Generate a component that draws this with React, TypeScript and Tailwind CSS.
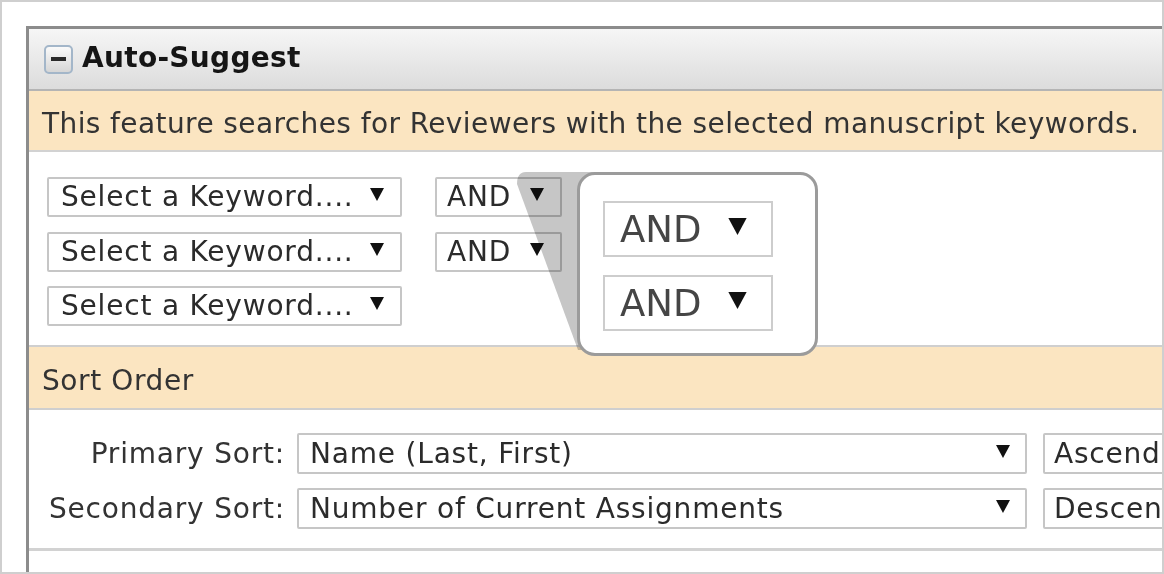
import React from "react";

function Arrow({ className = "w-[14px] h-[13px]" }: { className?: string }) {
  return (
    <svg viewBox="0 0 14 13" className={className}>
      <polygon points="0,0 14,0 7,13" fill="#111" />
    </svg>
  );
}

interface SelectBoxProps {
  label: string;
  width: string;
  height?: string;
  padLeft?: string;
  padRight?: string;
}

function SelectBox({ label, width, height = "h-[40px]", padLeft = "pl-[11px]", padRight = "pr-[15px]" }: SelectBoxProps) {
  return (
    <div
      className={`${width} ${height} ${padLeft} ${padRight} shrink-0 flex items-center justify-between rounded-[2px] border-2 border-[#c6c6c6] bg-white text-[28px] tracking-[0.8px] leading-none text-[#2b2b2b] whitespace-nowrap overflow-hidden`}
    >
      <span>{label}</span>
      <span className="pb-[5px]">
        <Arrow />
      </span>
    </div>
  );
}

function CollapseIcon() {
  return (
    <div className="w-[29px] h-[29px] rounded-[5px] border-2 border-[#a3b6c9] bg-gradient-to-b from-[#fafafa] to-[#d6d6d6] flex items-center justify-center">
      <div className="w-[15px] h-[4px] bg-[#2a2a2a]" />
    </div>
  );
}

export default function App() {
  return (
    <div className="w-[1164px] h-[574px] bg-white border-2 border-[#cfcfcf] overflow-hidden pl-[24px] pt-[24px] font-['DejaVu_Sans',sans-serif]">
      <div className="w-[1200px] h-full border-l-[3px] border-t-[3px] border-[#8c8c8c]">
        {/* header */}
        <div className="h-[62px] flex items-center gap-[9px] pl-[15px] border-b-2 border-[#b4b4b4] bg-gradient-to-b from-[#f6f6f6] to-[#dcdcdc]">
          <CollapseIcon />
          <span className="text-[28px] font-bold tracking-[0.3px] text-[#151515] leading-none pb-[2px]">Auto-Suggest</span>
        </div>

        {/* info */}
        <div className="h-[61px] flex items-center pl-[13px] pt-[7px] bg-[#fbe5c1] border-b-2 border-[#d2d2d2]">
          <span className="text-[28px] tracking-[0.4px] leading-none text-[#333] whitespace-nowrap">
            This feature searches for Reviewers with the selected manuscript keywords.
          </span>
        </div>

        {/* keywords */}
        <div className="relative h-[193px] pl-[18px] pt-[25px]">
          <div className="flex gap-[33px]">
            <div className="flex flex-col gap-[14.5px]">
              <SelectBox label="Select a Keyword...." width="w-[355px]" padLeft="pl-[12px]" padRight="pr-[16px]" />
              <SelectBox label="Select a Keyword...." width="w-[355px]" padLeft="pl-[12px]" padRight="pr-[16px]" />
              <SelectBox label="Select a Keyword...." width="w-[355px]" padLeft="pl-[12px]" padRight="pr-[16px]" />
            </div>
            <div className="flex flex-col gap-[14.5px]">
              <SelectBox label="AND" width="w-[127px]" padLeft="pl-[10px]" padRight="pr-[16px]" />
              <SelectBox label="AND" width="w-[127px]" padLeft="pl-[10px]" padRight="pr-[16px]" />
            </div>
          </div>

          {/* magnifier wedge */}
          <svg className="absolute left-[488px] top-[20px] w-[100px] h-[185px] mix-blend-multiply" viewBox="0 0 100 185">
            <path d="M9 0 H100 V140 L68 178 H61 L0 12 Q0 0 9 0 Z" fill="#c6c6c6" />
          </svg>

          {/* magnifier callout */}
          <div className="absolute left-[548px] top-[20px] w-[241px] h-[184px] rounded-[18px] border-[3px] border-[#9b9b9b] bg-white pl-[23px] pt-[26px] flex flex-col gap-[18px]">
            {["AND", "AND"].map((t, i) => (
              <div
                key={i}
                className="w-[170px] h-[56px] flex items-center justify-between pl-[15px] pr-[24px] border-2 border-[#cdcdcd] text-[37px] leading-none text-[#454545]"
              >
                <span className="blur-[0.4px]">{t}</span>
                <span className="pb-[6px]">
                  <Arrow className="w-[19px] h-[17px]" />
                </span>
              </div>
            ))}
          </div>
        </div>

        {/* sort order band */}
        <div className="h-[65px] flex items-center pl-[13px] pt-[7px] bg-[#fbe5c1] border-t-2 border-b-2 border-[#cfcfcf]">
          <span className="text-[28px] tracking-[0.6px] leading-none text-[#333]">Sort Order</span>
        </div>

        {/* sort rows */}
        <div className="h-[138px] pt-[23px] flex flex-col gap-[14px]">
          <div className="flex items-center">
            <div className="w-[256px] shrink-0 text-right text-[28px] tracking-[0.8px] leading-none text-[#333]">Primary Sort:</div>
            <div className="ml-[12px] flex gap-[16px] shrink-0">
              <SelectBox label="Name (Last, First)" width="w-[730px]" height="h-[41px]" />
              <SelectBox label="Ascending" width="w-[200px]" height="h-[41px]" padLeft="pl-[9px]" />
            </div>
          </div>
          <div className="flex items-center">
            <div className="w-[256px] shrink-0 text-right text-[28px] tracking-[0.8px] leading-none text-[#333]">Secondary Sort:</div>
            <div className="ml-[12px] flex gap-[16px] shrink-0">
              <SelectBox label="Number of Current Assignments" width="w-[730px]" height="h-[41px]" />
              <SelectBox label="Descending" width="w-[200px]" height="h-[41px]" padLeft="pl-[9px]" />
            </div>
          </div>
        </div>

        {/* bottom separator */}
        <div className="border-t-[3px] border-[#d2d2d2]" />
      </div>
    </div>
  );
}
